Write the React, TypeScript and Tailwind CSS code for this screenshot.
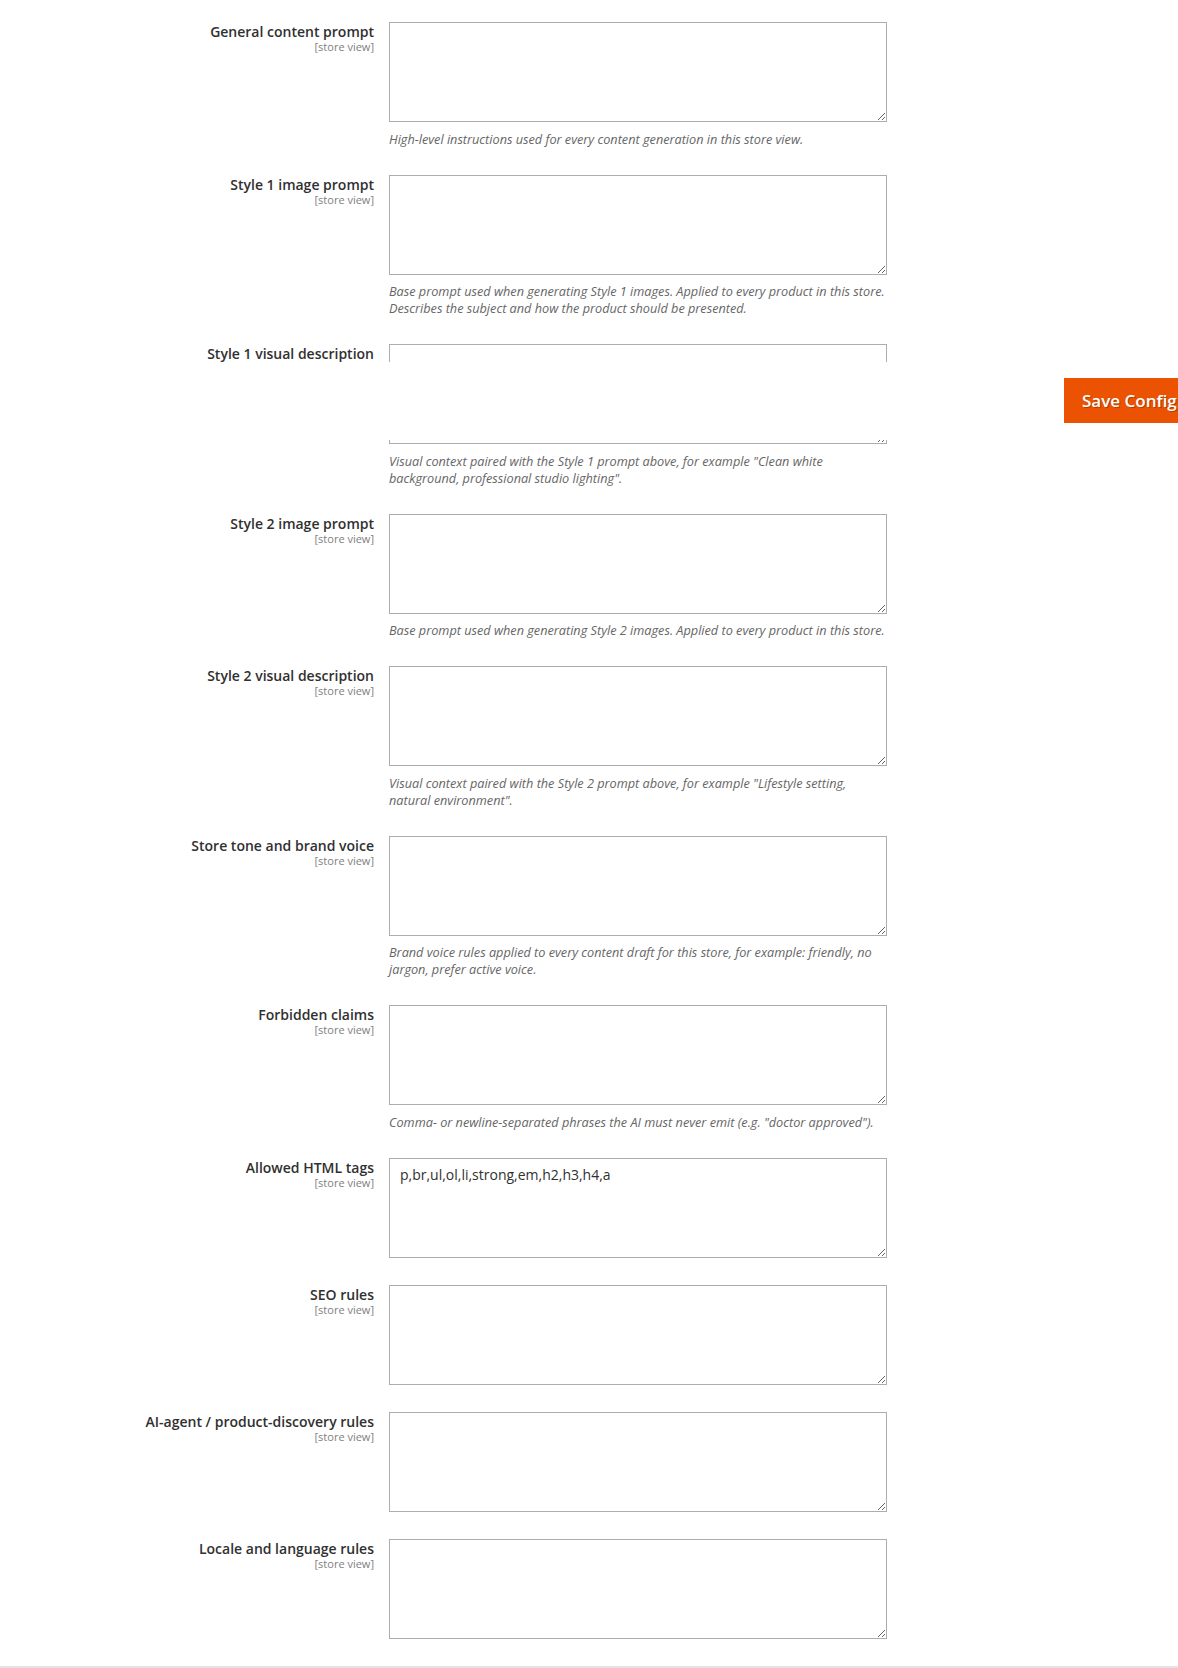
import { useState } from 'react'

type Field = {
    id: string
    label: string
    note?: string
    value?: string
}

// Content generation settings, one textarea per store-view field
const fields: Field[] = [
    {
        id: 'general_prompt',
        label: 'General content prompt',
        note: 'High-level instructions used for every content generation in this store view.',
    },
    {
        id: 'style1_prompt',
        label: 'Style 1 image prompt',
        note: 'Base prompt used when generating Style 1 images. Applied to every product in this store.\nDescribes the subject and how the product should be presented.',
    },
    {
        id: 'style1_visual',
        label: 'Style 1 visual description',
        note: 'Visual context paired with the Style 1 prompt above, for example "Clean white\nbackground, professional studio lighting".',
    },
    {
        id: 'style2_prompt',
        label: 'Style 2 image prompt',
        note: 'Base prompt used when generating Style 2 images. Applied to every product in this store.',
    },
    {
        id: 'style2_visual',
        label: 'Style 2 visual description',
        note: 'Visual context paired with the Style 2 prompt above, for example "Lifestyle setting,\nnatural environment".',
    },
    {
        id: 'brand_voice',
        label: 'Store tone and brand voice',
        note: 'Brand voice rules applied to every content draft for this store, for example: friendly, no\njargon, prefer active voice.',
    },
    {
        id: 'forbidden_claims',
        label: 'Forbidden claims',
        note: 'Comma- or newline-separated phrases the AI must never emit (e.g. "doctor approved").',
    },
    {
        id: 'allowed_html',
        label: 'Allowed HTML tags',
        value: 'p,br,ul,ol,li,strong,em,h2,h3,h4,a',
    },
    { id: 'seo_rules', label: 'SEO rules' },
    { id: 'agent_rules', label: 'AI-agent / product-discovery rules' },
    { id: 'locale_rules', label: 'Locale and language rules' },
]

function ConfigRow({ field, value, onChange }: { field: Field; value: string; onChange: (v: string) => void }) {
    return (
        <div className="grid grid-cols-[374px_498px] gap-x-[15px] mb-[27px]">
            <label htmlFor={field.id} className="text-right pt-[1px]">
                <span className="block text-[14px] leading-[18px] font-semibold text-[#303030]">{field.label}</span>
                <span className="block text-[11px] leading-[12px] text-[#808080]">[store view]</span>
            </label>
            <div>
                <textarea
                    id={field.id}
                    value={value}
                    onChange={(e) => onChange(e.target.value)}
                    className="block w-[498px] h-[100px] border border-[#adadad] bg-white px-[10px] py-[6px] text-[14px] leading-[1.36] text-[#303030] outline-none"
                />
                {field.note && (
                    <p className="mt-[8.5px] text-[12.7px] leading-[17px] italic text-[#666666] whitespace-pre">{field.note}</p>
                )}
            </div>
        </div>
    )
}

export default function App() {
    const [values, setValues] = useState<Record<string, string>>(
        Object.fromEntries(fields.map((f) => [f.id, f.value ?? '']))
    )

    return (
        <div className="relative min-h-[1668px] bg-white font-['Open_Sans',_'Liberation_Sans',_sans-serif] overflow-hidden">
            <div className="pt-[22px]">
                {fields.map((field) => (
                    <ConfigRow
                        key={field.id}
                        field={field}
                        value={values[field.id]}
                        onChange={(v) => setValues((prev) => ({ ...prev, [field.id]: v }))}
                    />
                ))}
            </div>
            <div className="h-[2px] bg-[#e3e3e3]" />

            <div className="absolute left-0 right-0 top-[362px] h-[78px] bg-white">
                <button className="absolute left-[1064px] top-[16px] h-[45px] pl-[18px] pr-[18px] bg-[#eb5202] text-white text-[17px] font-semibold whitespace-nowrap [text-shadow:1px_1px_0_rgba(0,0,0,0.25)]">
                    Save Config
                </button>
            </div>
        </div>
    )
}
